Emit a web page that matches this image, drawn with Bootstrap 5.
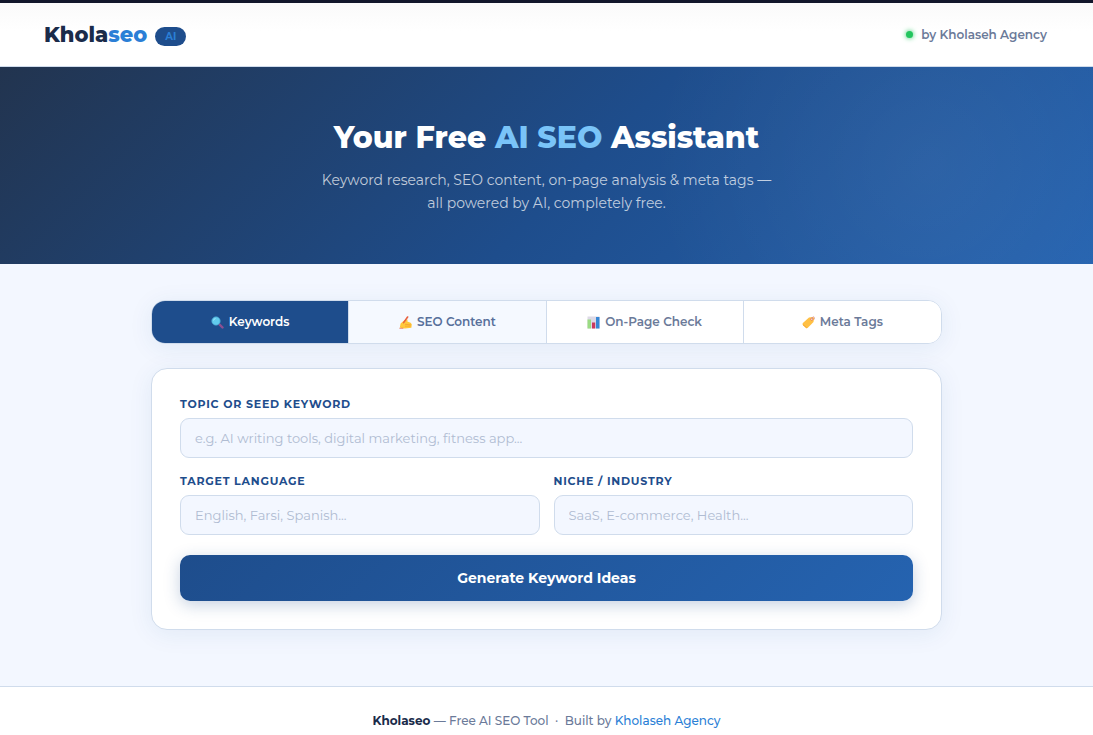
<!DOCTYPE html>
<html lang="en">
<head>
<meta charset="utf-8">
<meta name="viewport" content="width=device-width, initial-scale=1">
<title>Kholaseo AI</title>
<link href="https://cdn.jsdelivr.net/npm/bootstrap@5.3.0/dist/css/bootstrap.min.css" rel="stylesheet">
<style>
  :root { --navy: #1a2b4a; --blue: #1e4d8c; --bright: #2b7fd6; --line: #d0dcec; --muted: #6b7a99; --soft: #f3f7ff; }
  body { font-family: Montserrat, Inter, sans-serif; background: var(--soft); color: var(--muted); font-size: 12px; font-weight: 500; }
  a { color: var(--bright); text-decoration: none; }
  .site-header { border-top: 3px solid #12162b; border-bottom: 1px solid var(--line); background: linear-gradient(#fafafa, #fff 28px); padding: 0 46px 0 44px; height: 67px; }
  .brand { font-size: 21px; line-height: 28px; font-weight: 800; color: var(--navy); }
  .brand span { color: var(--bright); }
  .ai-pill { background: var(--blue); color: var(--bright); font-size: 10px; line-height: 19px; font-weight: 700; padding: 0 10px; margin-top: 3px; }
  .status-dot { width: 7px; height: 7px; background: #22c55e; box-shadow: 0 0 5px #22c55e; }
  .agency { font-weight: 600; }
  .hero { background: radial-gradient(circle at 85% 50%, rgba(255,255,255,.05), transparent 30%), linear-gradient(135deg, #22344f 0%, #1e4d8c 53%, #2563b0 100%); padding: 51px 24px 49px; }
  .hero h1 { font-size: 30px; line-height: 40px; font-weight: 800; color: #fff; margin-bottom: 11px; }
  .hero h1 span { color: #7ac4f8; }
  .hero p { font-size: 14px; line-height: 23px; font-weight: 400; color: rgba(255,255,255,.72); max-width: 460px; }
  .tool { max-width: 791px; padding: 36px 0 56px; }
  .tabs { border: 1px solid var(--line); border-radius: 14px; box-shadow: 0 4px 24px rgba(30,77,140,.08); margin-bottom: 24px; }
  .tabs button { border: 0; border-right: 1px solid var(--line); background: #fff; color: var(--muted); height: 42px; font-size: 12px; font-weight: 600; gap: 5px; }
  .tabs button:last-child { border-right: 0; }
  .tabs button.active { background: var(--blue); color: #fff; }
  .tabs button.hovered { background: #f5f9ff; color: #58709b; }
  .tabs svg { width: 13px; height: 13px; }
  .panel { border: 1px solid var(--line); border-radius: 16px; padding: 28px; box-shadow: 0 4px 24px rgba(30,77,140,.08); }
  .panel label { display: block; font-size: 11px; line-height: 15px; font-weight: 700; letter-spacing: .07em; color: var(--blue); margin-bottom: 6px; text-transform: uppercase; }
  .panel .form-control { height: 40px; font-size: 13px; padding: 0 14px; border-color: var(--line); border-radius: 9px; background: var(--soft); }
  .panel .form-control::placeholder { color: #b0bcd2; }
  .fields { gap: 16px 14px; }
  .generate { height: 46px; border: 0; border-radius: 10px; background: linear-gradient(135deg, #1e4d8c, #2563b0); color: #fff; font-size: 14px; font-weight: 700; box-shadow: 0 4px 16px rgba(30,77,140,.25); margin-top: 20px; }
  .site-footer { border-top: 1px solid var(--line); padding: 24px 24px 4px; line-height: 20px; }
  .site-footer strong { color: var(--navy); font-weight: 700; }
</style>
</head>
<body class="d-flex flex-column min-vh-100">
<header class="site-header d-flex align-items-center justify-content-between">
  <div class="d-flex align-items-center gap-2">
    <div class="brand">Khola<span>seo</span></div>
    <span class="ai-pill rounded-pill">AI</span>
  </div>
  <div class="agency d-flex align-items-center gap-2"><i class="status-dot rounded-circle"></i>by Kholaseh Agency</div>
</header>
<section class="hero text-center">
  <h1>Your Free <span>AI SEO</span> Assistant</h1>
  <p class="mx-auto mb-0">Keyword research, SEO content, on-page analysis &amp; meta tags — all powered by AI, completely free.</p>
</section>
<main class="tool w-100 mx-auto">
  <nav class="tabs d-flex overflow-hidden" aria-label="Tools">
    <button type="button" class="active flex-fill w-25 d-flex align-items-center justify-content-center">
      <svg viewBox="0 0 13 13" aria-hidden="true"><path d="M8 8l3.5 3.5" stroke="#8d4f91" stroke-width="2.4" stroke-linecap="round"/><circle cx="5" cy="5" r="4.3" fill="#62cbed" stroke="#3d8fc0" stroke-width=".7"/><path d="M2.5 4.5a2.5 2.5 0 0 1 2-2" stroke="#a3e7fa" fill="none"/></svg>Keywords</button>
    <button type="button" class="hovered flex-fill w-25 d-flex align-items-center justify-content-center">
      <svg viewBox="0 0 13 13" aria-hidden="true"><path d="M.8 11.4L1.6 7.6 5.6 4 8.6 3.4 8.4 5.4l3.2 1.4 1.2 1.5-.4 3.4-6.4.8-3.4-.6z" fill="#ffc83d"/><path d="M6 8.3l5.8.6M6 10.2l5.5-.1" stroke="#f59b28" stroke-width=".7"/><path d="M4.6 6.6L8.6 1" stroke="#e8603f" stroke-width="1.6" stroke-linecap="round"/><path d="M.4 12.3h4" stroke="#e45a42" stroke-width=".7"/></svg>SEO Content</button>
    <button type="button" class="flex-fill w-25 d-flex align-items-center justify-content-center">
      <svg viewBox="0 0 13 13" aria-hidden="true"><path fill="#ddd9e6" d="M.5.5h12v12H.5z"/><path fill="#9bdc83" d="M.5 3.5H4v9H.5z"/><path fill="#c9395f" d="M5 6.5h3.2v6H5z"/><path fill="#3687d5" d="M9 1h3.5v11.5H9z"/></svg>On-Page Check</button>
    <button type="button" class="flex-fill w-25 d-flex align-items-center justify-content-center">
      <svg viewBox="0 0 13 13" aria-hidden="true"><path d="M.6 7.2L7 1.4l4-.5 1.1 1-.6 4-5.9 6.2-1.3.1L.6 8.6z" fill="#ffc044"/><path d="M1 8.8l3.6 3" stroke="#f3a22c"/><circle cx="9.8" cy="3.2" r="1.1" fill="#fff" stroke="#d96352" stroke-width=".7"/><path d="M9.8 3Q10.5.4 12 .8t.2 2.7" fill="none" stroke="#d98c8b" stroke-width=".7"/></svg>Meta Tags</button>
  </nav>
  <form class="panel bg-white">
    <div class="fields d-flex flex-wrap">
      <div class="w-100"><label for="topic">Topic or seed keyword</label><input id="topic" type="text" class="form-control" placeholder="e.g. AI writing tools, digital marketing, fitness app..."></div>
      <div class="col"><label for="language">Target language</label><input id="language" type="text" class="form-control" placeholder="English, Farsi, Spanish..."></div>
      <div class="col"><label for="niche">Niche / industry</label><input id="niche" type="text" class="form-control" placeholder="SaaS, E-commerce, Health..."></div>
    </div>
    <button type="button" class="generate w-100">Generate Keyword Ideas</button>
  </form>
</main>
<footer class="site-footer bg-white text-center flex-grow-1"><strong>Kholaseo</strong> — Free AI SEO Tool &nbsp;·&nbsp; Built by <a href="#">Kholaseh Agency</a></footer>
<script src="https://cdn.jsdelivr.net/npm/bootstrap@5.3.0/dist/js/bootstrap.bundle.min.js"></script>
</body>
</html>
